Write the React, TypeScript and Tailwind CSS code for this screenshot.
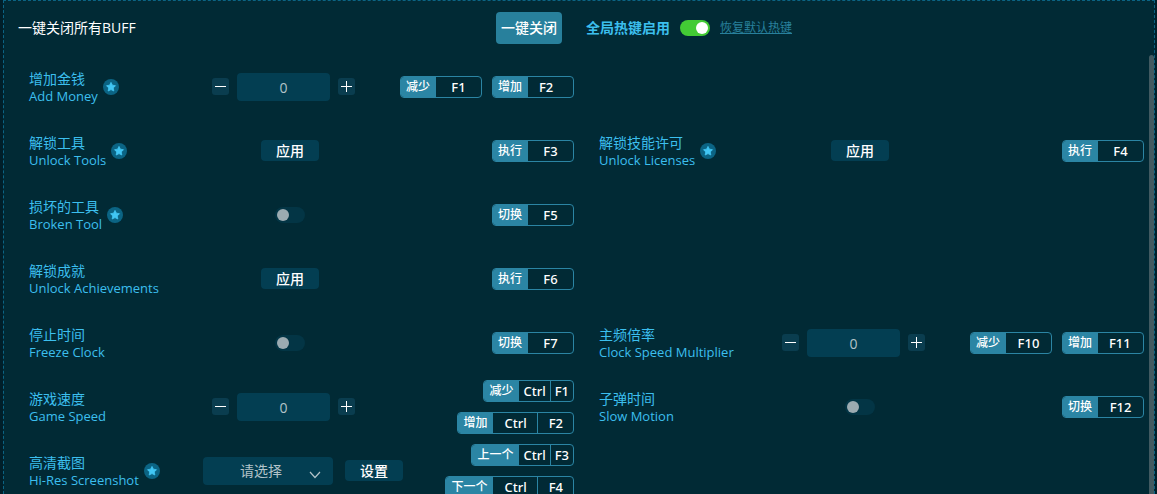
import { useId, useState } from "react";

type Hotkey = { action: string; keys: string[]; wide?: boolean };
type Control = "stepper" | "apply" | "toggle" | "select";
type Option = {
  name: string;
  english: string;
  starred?: boolean;
  control: Control;
  hotkeys: Hotkey[];
  stacked?: boolean;
};

const rows: (Option | null)[][] = [
  [
    {
      name: "增加金钱",
      english: "Add Money",
      starred: true,
      control: "stepper",
      hotkeys: [
        { action: "减少", keys: ["F1"] },
        { action: "增加", keys: ["F2"], wide: true },
      ],
    },
    null,
  ],
  [
    { name: "解锁工具", english: "Unlock Tools", starred: true, control: "apply", hotkeys: [{ action: "执行", keys: ["F3"] }] },
    { name: "解锁技能许可", english: "Unlock Licenses", starred: true, control: "apply", hotkeys: [{ action: "执行", keys: ["F4"] }] },
  ],
  [{ name: "损坏的工具", english: "Broken Tool", starred: true, control: "toggle", hotkeys: [{ action: "切换", keys: ["F5"] }] }, null],
  [{ name: "解锁成就", english: "Unlock Achievements", control: "apply", hotkeys: [{ action: "执行", keys: ["F6"] }] }, null],
  [
    { name: "停止时间", english: "Freeze Clock", control: "toggle", hotkeys: [{ action: "切换", keys: ["F7"] }] },
    {
      name: "主频倍率",
      english: "Clock Speed Multiplier",
      control: "stepper",
      hotkeys: [
        { action: "减少", keys: ["F10"] },
        { action: "增加", keys: ["F11"], wide: true },
      ],
    },
  ],
  [
    {
      name: "游戏速度",
      english: "Game Speed",
      control: "stepper",
      stacked: true,
      hotkeys: [
        { action: "减少", keys: ["Ctrl", "F1"] },
        { action: "增加", keys: ["Ctrl", "F2"], wide: true },
      ],
    },
    { name: "子弹时间", english: "Slow Motion", control: "toggle", hotkeys: [{ action: "切换", keys: ["F12"] }] },
  ],
  [
    {
      name: "高清截图",
      english: "Hi-Res Screenshot",
      starred: true,
      control: "select",
      stacked: true,
      hotkeys: [
        { action: "上一个", keys: ["Ctrl", "F3"] },
        { action: "下一个", keys: ["Ctrl", "F4"], wide: true },
      ],
    },
    null,
  ],
];

function Star() {
  return (
    <svg viewBox="0 0 16 16" className="size-4 shrink-0" aria-hidden="true">
      <circle cx="8" cy="8" r="8" fill="#0b6484" />
      <path
        d="M8 3.4 9.4 6.2 12.5 6.7 10.3 8.9 10.8 12 8 10.6 5.2 12 5.7 8.9 3.5 6.7 6.6 6.2Z"
        fill="#41c6f4"
        stroke="#41c6f4"
        strokeWidth="0.8"
        strokeLinejoin="round"
      />
    </svg>
  );
}

function HotkeyBadge({ action, keys, wide }: Hotkey) {
  return (
    <button type="button" className="flex h-[22px] overflow-hidden rounded border border-[#2b85a4] text-white">
      <span className="h-full bg-[#2b85a4] pr-1.5 pl-[5px] text-xs leading-[19px] font-medium">{action}</span>
      <span className={"flex h-full min-w-[45px] " + (wide ? "justify-start" : "justify-center")}>
        {keys.map((key, i) => (
          <span key={key} className={"flex items-center " + (i > 0 ? "border-l border-[#2b85a4]" : "")}>
            <span
              className={
                "font-['Noto_Sans',sans-serif] text-[13px] leading-5 font-medium " + (wide ? "pr-2.5 pl-[11px]" : "px-1")
              }
            >
              {key}
            </span>
          </span>
        ))}
      </span>
    </button>
  );
}

function StepButton({ plus, onClick }: { plus?: boolean; onClick: () => void }) {
  return (
    <button
      type="button"
      onClick={onClick}
      aria-label={plus ? "+" : "-"}
      className="mb-px flex size-[17px] items-center justify-center rounded-[3px] bg-[#0a3d4f] text-white"
    >
      <svg viewBox="0 0 11 11" className="size-[11px]" stroke="currentColor" strokeWidth="1">
        <path d={plus ? "M0 5.5H11M5.5 0V11" : "M0 5.5H11"} />
      </svg>
    </button>
  );
}

function Stepper({ id }: { id: string }) {
  const [value, setValue] = useState(0);
  return (
    <div className="mr-[13px] flex items-center gap-2">
      <StepButton onClick={() => setValue(value - 1)} />
      <input
        id={id}
        type="text"
        inputMode="numeric"
        value={value}
        onChange={(e) => setValue(Number(e.target.value) || 0)}
        className="h-7 w-[93px] rounded bg-[#033e52] text-center text-sm text-[#b3c3c9]"
      />
      <StepButton plus onClick={() => setValue(value + 1)} />
    </div>
  );
}

function ActionButton({ id, children }: { id?: string; children: string }) {
  return (
    <button
      id={id}
      type="button"
      className="mb-px flex h-[21px] w-[58px] shrink-0 items-center justify-center rounded bg-[#033e52] text-sm font-medium text-white"
    >
      {children}
    </button>
  );
}

function OptionControl({ kind, id }: { kind: Control; id: string }) {
  if (kind === "stepper") return <Stepper id={id} />;
  if (kind === "apply") return <ActionButton id={id}>应用</ActionButton>;
  if (kind === "toggle")
    return (
      <input
        id={id}
        type="checkbox"
        className="flex h-4 w-[30px] appearance-none items-center rounded-full bg-[#033545] px-0.5 before:size-3 before:rounded-full before:bg-[#9cabb1] checked:justify-end checked:bg-[#43cb35] checked:before:bg-white"
      />
    );
  return (
    <div className="flex w-full items-center gap-3">
      <div className="relative shrink-0">
        <select id={id} className="h-7 w-[130px] appearance-none rounded bg-[#033e52] pl-[37px] text-sm text-[#b3c3c9]">
          <option>请选择</option>
        </select>
        <svg viewBox="0 0 12 8" className="pointer-events-none absolute top-[14px] right-3 h-2 w-3" fill="none" stroke="#b3c3c9" strokeWidth="1.2">
          <path d="M1 1 6 6.5 11 1" />
        </svg>
      </div>
      <ActionButton>设置</ActionButton>
    </div>
  );
}

function OptionCell({ option }: { option: Option }) {
  const id = useId();
  return (
    <div className="flex h-16 items-center pl-[25px]">
      <div className="flex w-[174px] shrink-0 items-center gap-[5px]">
        <label htmlFor={id} className="flex flex-col whitespace-nowrap text-[#3cbfee]">
          <span className="text-sm leading-[18px]">{option.name}</span>
          <span className="text-[13px] leading-4">{option.english}</span>
        </label>
        {option.starred && <Star />}
      </div>
      <div className="flex w-[174px] shrink-0 justify-center">
        <OptionControl kind={option.control} id={id} />
      </div>
      <div className={"ml-auto flex gap-2.5 " + (option.stacked ? "flex-col items-end" : "")}>
        {option.hotkeys.map((hotkey) => (
          <HotkeyBadge key={hotkey.action} {...hotkey} />
        ))}
      </div>
    </div>
  );
}

export default function App() {
  return (
    <div className="h-screen overflow-hidden bg-[#001f2a] pr-0.5 pl-[3px] font-['Open_Sans','Noto_Sans_CJK_SC',sans-serif]">
      <main className="flex h-full flex-col border border-b-0 border-dashed border-[#0b6484] bg-[#012a35]">
        <header className="grid h-[54px] shrink-0 grid-cols-2 items-center pr-[10px]">
          <div className="flex items-center justify-between pr-3 pl-3.5">
            <h1 className="text-sm text-white">一键关闭所有BUFF</h1>
            <button type="button" className="h-8 w-[66px] rounded bg-[#28809c] text-sm font-medium whitespace-nowrap text-white">
              一键关闭
            </button>
          </div>
          <div className="flex items-center gap-2.5 pl-3">
            <label htmlFor="global-hotkeys" className="text-sm font-bold text-[#3cbfee]">
              全局热键启用
            </label>
            <input
              id="global-hotkeys"
              type="checkbox"
              defaultChecked
              className="flex h-4 w-[30px] appearance-none items-center rounded-full bg-[#033545] px-0.5 before:size-3 before:rounded-full before:bg-white checked:justify-end checked:bg-[#43cb35]"
            />
            <a href="#reset" className="text-xs text-[#28809c] underline">
              恢复默认热键
            </a>
          </div>
        </header>
        <div className="flex min-h-0 grow">
          <div className="grow overflow-hidden pr-[5px]">
            {rows.map((row, r) => (
              <div key={r} className="grid grid-cols-2">
                {row.map((option, c) => option && <OptionCell key={c} option={option} />)}
              </div>
            ))}
          </div>
          <div className="w-[5px] shrink-0 rounded-t-full bg-[#415a61]" />
        </div>
      </main>
    </div>
  );
}
